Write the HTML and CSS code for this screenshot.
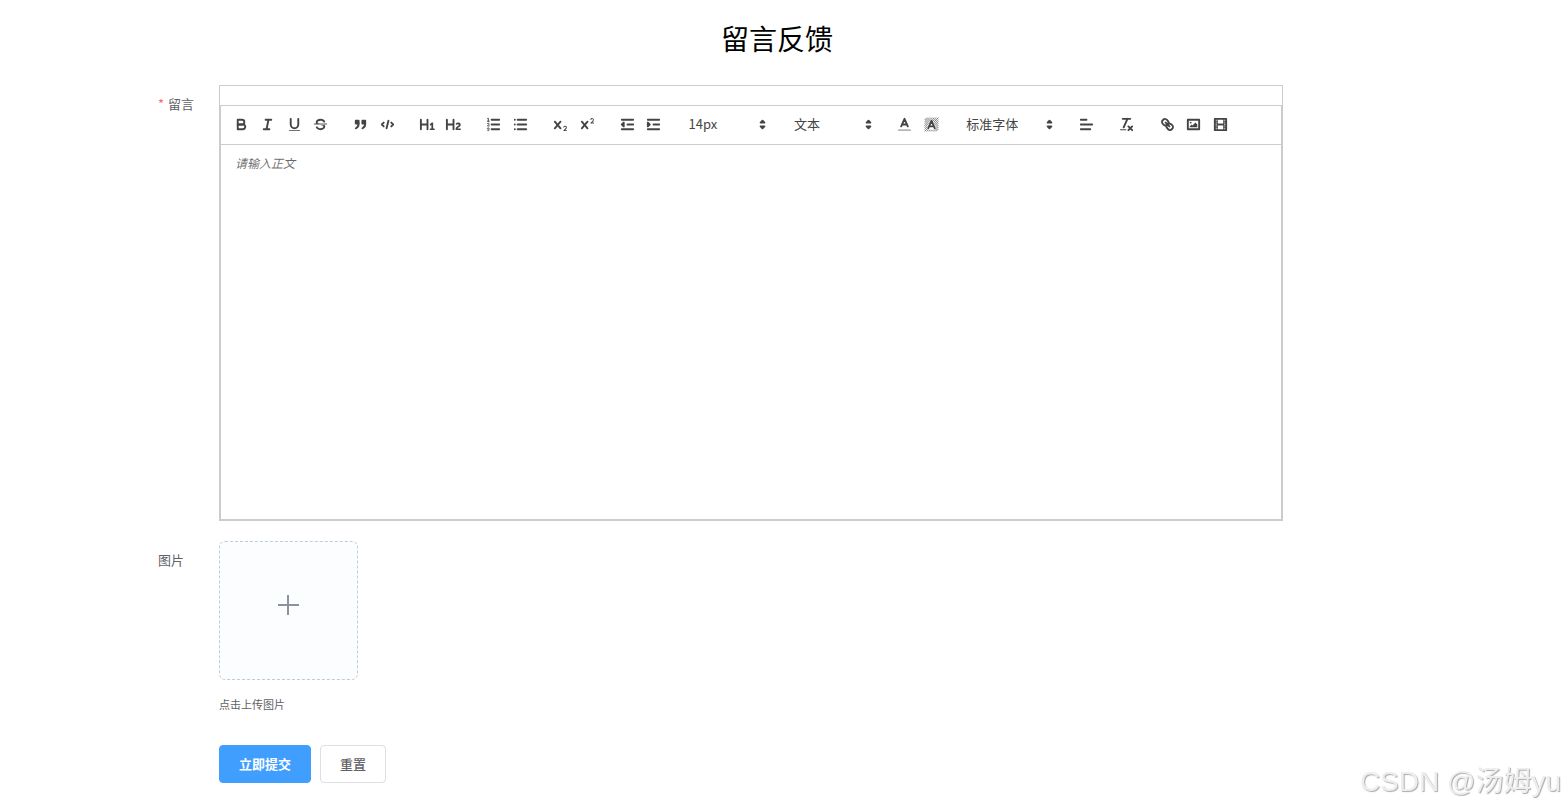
FILE: index.html
```html
<!DOCTYPE html>
<html lang="zh-CN">
<head>
<meta charset="utf-8">
<title>留言反馈</title>
<link rel="stylesheet" href="styles.css">
</head>
<body>
<main class="page">
  <h1 class="title">留言反馈</h1>
  <form class="form">
    <div class="row">
      <label class="label" for="message"><span class="required">*</span>留言</label>
      <div class="field editor">
        <div class="toolbar">
          <div class="tools">
            <div class="group four">
              <button type="button" class="tool" aria-label="加粗"><svg viewBox="0 0 18 18"><path d="M5,4H9.5A2.5,2.5,0,0,1,12,6.5v0A2.5,2.5,0,0,1,9.5,9H5V4Z"/><path d="M5,9h5.5A2.5,2.5,0,0,1,13,11.5v0A2.5,2.5,0,0,1,10.5,14H5V9Z"/></svg></button>
              <button type="button" class="tool" aria-label="斜体"><svg viewBox="0 0 18 18"><path d="M7 4H13M5 14H11M8 14L10 4"/></svg></button>
              <button type="button" class="tool" aria-label="下划线"><svg viewBox="0 0 18 18"><path d="M5,3V9a4.012,4.012,0,0,0,4,4H9a4.012,4.012,0,0,0,4-4V3"/><rect class="fill" height="1" rx="0.5" ry="0.5" width="12" x="3" y="15"/></svg></button>
              <button type="button" class="tool" aria-label="删除线"><svg viewBox="0 0 18 18"><path class="thin" d="M15.5 8.5H2.5"/><path class="fill" d="M9.007,8C6.542,7.791,6,7.519,6,6.5,6,5.792,7.283,5,9,5c1.571,0,2.765.679,2.969,1.309a1,1,0,0,0,1.9-.617C13.356,4.106,11.354,3,9,3,6.2,3,4,4.538,4,6.5a3.2,3.2,0,0,0,.5,1.843Z"/><path class="fill" d="M8.984,10C11.457,10.208,12,10.479,12,11.5c0,0.708-1.283,1.5-3,1.5-1.571,0-2.765-.679-2.969-1.309a1,1,0,1,0-1.9.617C4.644,13.894,6.646,15,9,15c2.8,0,5-1.538,5-3.5a3.2,3.2,0,0,0-.5-1.843Z"/></svg></button>
            </div>
            <div class="group two">
              <button type="button" class="tool" aria-label="引用"><svg viewBox="0 0 18 18"><rect class="both" height="3" width="3" x="4" y="5"/><rect class="both" height="3" width="3" x="11" y="5"/><path class="both" d="M7,8c0,4.031-3,5-3,5"/><path class="both" d="M14,8c0,4.031-3,5-3,5"/></svg></button>
              <button type="button" class="tool" aria-label="代码"><svg viewBox="0 0 18 18"><path d="M5 7L3 9L5 11M13 7L15 9L13 11M10 5L8 13"/></svg></button>
            </div>
            <div class="group two">
              <button type="button" class="tool" aria-label="一级标题"><svg viewBox="0 0 18 18"><path class="fill" d="M10,4V14a1,1,0,0,1-2,0V10H3v4a1,1,0,0,1-2,0V4A1,1,0,0,1,3,4V8H8V4a1,1,0,0,1,2,0Zm6.06787,9.209H14.98975V7.59863a.54085.54085,0,0,0-.605-.60547h-.62744a1.01119,1.01119,0,0,0-.748.29688L11.645,8.56641a.5435.5435,0,0,0-.022.8584l.28613.30762a.53861.53861,0,0,0,.84717.0332l.09912-.08789a1.2137,1.2137,0,0,0,.2417-.35254h.02246s-.01123.30859-.01123.60547V13.209H12.041a.54085.54085,0,0,0-.605.60547v.43945a.54085.54085,0,0,0,.605.60547h4.02686a.54085.54085,0,0,0,.605-.60547v-.43945A.54085.54085,0,0,0,16.06787,13.209Z"/></svg></button>
              <button type="button" class="tool" aria-label="二级标题"><svg viewBox="0 0 18 18"><path class="fill" d="M16.73975,13.81445v.43945a.54085.54085,0,0,1-.605.60547H11.855a.58392.58392,0,0,1-.64893-.60547V14.0127c0-2.90527,3.39941-3.42187,3.39941-4.55469a.77675.77675,0,0,0-.84717-.78125,1.17684,1.17684,0,0,0-.83594.38477c-.2749.26367-.561.374-.85791.13184l-.4292-.34082c-.30811-.24219-.38525-.51758-.1543-.81445a2.97155,2.97155,0,0,1,2.45361-1.17676,2.45393,2.45393,0,0,1,2.68408,2.40918c0,2.45312-3.1792,2.92676-3.27832,3.93848h2.79443A.54085.54085,0,0,1,16.73975,13.81445ZM9,3A.99974.99974,0,0,0,8,4V8H3V4A1,1,0,0,0,1,4V14a1,1,0,0,0,2,0V10H8v4a1,1,0,0,0,2,0V4A.99974.99974,0,0,0,9,3Z"/></svg></button>
            </div>
            <div class="group two">
              <button type="button" class="tool" aria-label="有序列表"><svg viewBox="0 0 18 18"><path d="M7 4H15M7 9H15M7 14H15"/><path class="thin" d="M2.5 5.5H4.5"/><path class="fill" d="M3.5,6A0.5,0.5,0,0,1,3,5.5V3.085l-0.276.138A0.5,0.5,0,0,1,2.053,3c-0.124-.247-0.023-0.324.224-0.447l1-.5A0.5,0.5,0,0,1,4,2.5v3A0.5,0.5,0,0,1,3.5,6Z"/><path class="thin" d="M4.5,10.5h-2c0-.234,1.85-1.076,1.85-2.234A0.959,0.959,0,0,0,2.5,8.156"/><path class="thin" d="M2.5,14.846a0.959,0.959,0,0,0,1.85-.109A0.7,0.7,0,0,0,3.75,14a0.688,0.688,0,0,0,.6-0.736,0.959,0.959,0,0,0-1.85-.109"/></svg></button>
              <button type="button" class="tool" aria-label="无序列表"><svg viewBox="0 0 18 18"><path d="M6 4H15M6 9H15M6 14H15M3 4V4M3 9V9M3 14V14"/></svg></button>
            </div>
            <div class="group two">
              <button type="button" class="tool" aria-label="下标"><svg viewBox="0 0 18 18"><path class="fill" d="M15.5,15H13.861a3.858,3.858,0,0,0,1.914-2.975,1.8,1.8,0,0,0-1.6-1.751A1.921,1.921,0,0,0,12.021,11.7a0.50013,0.50013,0,1,0,.957.291h0a0.914,0.914,0,0,1,1.053-.725,0.81,0.81,0,0,1,.744.762c0,1.076-1.16971,1.86982-1.93971,2.43082A1.45639,1.45639,0,0,0,12,15.5a0.5,0.5,0,0,0,.5.5h3A0.5,0.5,0,0,0,15.5,15Z"/><path class="fill" d="M9.65,5.241a1,1,0,0,0-1.409.108L6,7.964,3.759,5.349A1,1,0,0,0,2.192,6.59178Q2.21541,6.6213,2.241,6.649L4.684,9.5,2.241,12.35A1,1,0,0,0,3.71,13.70722q0.02557-.02768.049-0.05722L6,11.036,8.241,13.65a1,1,0,1,0,1.567-1.24277Q9.78459,12.3777,9.759,12.35L7.316,9.5,9.759,6.651A1,1,0,0,0,9.65,5.241Z"/></svg></button>
              <button type="button" class="tool" aria-label="上标"><svg viewBox="0 0 18 18"><path class="fill" d="M15.5,7H13.861a4.015,4.015,0,0,0,1.914-2.975,1.8,1.8,0,0,0-1.6-1.751A1.922,1.922,0,0,0,12.021,3.7a0.5,0.5,0,1,0,.957.291,0.917,0.917,0,0,1,1.053-.725,0.81,0.81,0,0,1,.744.762c0,1.077-1.164,1.925-1.934,2.486A1.423,1.423,0,0,0,12,7.5a0.5,0.5,0,0,0,.5.5h3A0.5,0.5,0,0,0,15.5,7Z"/><path class="fill" d="M9.651,5.241a1,1,0,0,0-1.41.108L6,7.964,3.759,5.349a1,1,0,1,0-1.519,1.3L4.683,9.5,2.241,12.35a1,1,0,1,0,1.519,1.3L6,11.036,8.241,13.65a1,1,0,0,0,1.519-1.3L7.317,9.5,9.759,6.651A1,1,0,0,0,9.651,5.241Z"/></svg></button>
            </div>
            <div class="group two">
              <button type="button" class="tool" aria-label="减少缩进"><svg viewBox="0 0 18 18"><path d="M3 14H15M3 4H15M9 9H15"/><path class="both" d="M5 7V11L3 9Z"/></svg></button>
              <button type="button" class="tool" aria-label="增加缩进"><svg viewBox="0 0 18 18"><path d="M3 14H15M3 4H15M9 9H15"/><path class="both" d="M3 7V11L5 9Z"/></svg></button>
            </div>
            <div class="picker">
              <select aria-label="字号"><option>14px</option></select>
              <svg class="caret" viewBox="0 0 18 18"><path class="both" d="M7 11L9 13L11 11ZM7 7L9 5L11 7Z"/></svg>
            </div>
            <div class="picker">
              <select aria-label="段落格式"><option>文本</option></select>
              <svg class="caret" viewBox="0 0 18 18"><path class="both" d="M7 11L9 13L11 11ZM7 7L9 5L11 7Z"/></svg>
            </div>
            <div class="group two">
              <button type="button" class="tool" aria-label="文字颜色"><svg viewBox="0 0 18 18"><path class="faint" d="M3 15H15"/><path d="M5.5 11L9 3L12.5 11M11.63 9H6.38"/></svg></button>
              <button type="button" class="tool" aria-label="背景颜色"><svg viewBox="0 0 18 18"><path class="hatch" d="M2 4L4 2M2 6L6 2M2 8L8 2M2 10L10 2M2 12L12 2M2 14L14 2M2 16L16 2M4 16L16 4M6 16L16 6M8 16L16 8M10 16L16 10M12 16L16 12M14 16L16 14"/><path class="halo" d="M5.5 13L9 5L12.5 13Z"/><path d="M5.5 13L9 5L12.5 13M11.63 11H6.38"/></svg></button>
            </div>
            <div class="picker wide">
              <select aria-label="字体"><option>标准字体</option></select>
              <svg class="caret" viewBox="0 0 18 18"><path class="both" d="M7 11L9 13L11 11ZM7 7L9 5L11 7Z"/></svg>
            </div>
            <div class="group one">
              <button type="button" class="tool" aria-label="对齐"><svg viewBox="0 0 18 18"><path d="M3 9H15M3 14H13M3 4H9"/></svg></button>
            </div>
            <div class="group one">
              <button type="button" class="tool" aria-label="清除格式"><svg viewBox="0 0 18 18"><path d="M5 3H13M6 12L10 3M11 11L15 15M15 11L11 15"/><rect class="fill" height="1" rx="0.5" ry="0.5" width="7" x="2" y="14"/></svg></button>
            </div>
            <div class="group three">
              <button type="button" class="tool" aria-label="链接"><svg viewBox="0 0 18 18"><path d="M7 7L11 11"/><path d="M8.9,4.577a3.476,3.476,0,0,1,.36,4.679A3.476,3.476,0,0,1,4.577,8.9C3.185,7.5,2.035,6.4,4.217,4.217S7.5,3.185,8.9,4.577Z"/><path d="M13.423,9.1a3.476,3.476,0,0,0-4.679-.36,3.476,3.476,0,0,0,.36,4.679c1.392,1.392,2.5,2.542,4.679.36S14.815,10.5,13.423,9.1Z"/></svg></button>
              <button type="button" class="tool" aria-label="图片"><svg viewBox="0 0 18 18"><rect height="10" width="12" x="3" y="4"/><circle class="fill" cx="6" cy="7" r="1"/><path class="fill" d="M5 12V11L7 9L8 10L11 7L13 9V12Z"/></svg></button>
              <button type="button" class="tool" aria-label="视频"><svg viewBox="0 0 18 18"><rect height="12" width="12" x="3" y="3"/><rect class="fill" height="12" width="1" x="5" y="3"/><rect class="fill" height="12" width="1" x="12" y="3"/><rect class="fill" height="2" width="8" x="5" y="8"/><path class="fill" d="M3 5H6V6H3ZM3 7H6V8H3ZM3 10H6V11H3ZM3 12H6V13H3ZM12 5H15V6H12ZM12 7H15V8H12ZM12 10H15V11H12ZM12 12H15V13H12Z"/></svg></button>
            </div>
          </div>
        </div>
        <textarea class="text" id="message" placeholder="请输入正文"></textarea>
      </div>
    </div>
    <div class="row">
      <label class="label" for="picture">图片</label>
      <div class="field">
        <button type="button" class="upload" id="picture" aria-label="上传图片"><svg viewBox="0 0 23 22"><path d="M1 11H22M11 1V21"/></svg></button>
        <p class="tip">点击上传图片</p>
        <div class="actions">
          <button type="submit" class="btn primary">立即提交</button>
          <button type="reset" class="btn">重置</button>
        </div>
      </div>
    </div>
  </form>
</main>
<div class="watermark">CSDN @汤姆yu</div>
</body>
</html>
```
FILE: styles.css
```css
* {
  box-sizing: border-box;
}

body {
  margin: 0;
  background: #fff;
  color: #606266;
  font: 13px/20px "Noto Sans CJK SC", sans-serif;
}

button,
select,
textarea {
  font: inherit;
}

.page {
  margin: 0 169px 0 158px;
  padding-top: 18px;
}

.title {
  margin: 0 0 27px;
  color: #000;
  font-size: 28px;
  font-weight: 400;
  line-height: 40px;
  text-align: center;
}

.form {
  margin-right: 113px;
}

.row {
  display: flex;
  margin-bottom: 20px;
}

.label {
  flex: none;
  width: 61px;
  line-height: 37px;
}

.required {
  margin-right: 4px;
  color: #f56c6c;
}

.field {
  flex: 1;
  min-width: 0;
}

.editor {
  display: flex;
  flex-direction: column;
  padding-top: 19px;
  border: 1px solid #ccc;
}

.toolbar {
  padding: 7px 7px 9px;
  border: 1px solid #ccc;
}

.tools {
  display: flex;
  justify-content: space-between;
  max-width: 1006px;
  height: 22px;
}

.group {
  display: flex;
}

.one {
  width: 27px;
}

.two {
  width: 53px;
}

.three {
  width: 80px;
}

.four {
  width: 106px;
}

.tool {
  display: flex;
  flex: 1;
  align-items: center;
  justify-content: center;
  padding: 0;
  border: 0;
  background: none;
  cursor: pointer;
}

.tools svg {
  width: 17px;
  height: 17px;
  fill: none;
  stroke: #444;
  stroke-width: 2;
  stroke-linecap: round;
  stroke-linejoin: round;
}

.tools .fill {
  fill: #444;
  stroke: none;
}

.tools .both {
  fill: #444;
}

.tools .thin {
  stroke-width: 1;
}

.tools .hatch {
  stroke-width: 0.7;
}

.tools .halo {
  fill: #fff;
  stroke: #fff;
  stroke-width: 3;
}

.tools .faint {
  opacity: 0.4;
}

.picker {
  position: relative;
  width: 92px;
}

.wide {
  width: 101px;
}

.picker select {
  width: 100%;
  height: 22px;
  padding: 0 8px;
  border: 0;
  appearance: none;
  background: none;
  color: #444;
}

.picker .caret {
  position: absolute;
  top: 3px;
  right: 1px;
  pointer-events: none;
}

.text {
  display: block;
  height: 375px;
  padding: 8px 14px;
  border: 1px solid #ccc;
  border-top: 0;
  outline: 0;
  resize: none;
  font-size: 12px;
}

.text::placeholder {
  color: rgba(0, 0, 0, 0.6);
  font-style: italic;
}

.upload {
  display: flex;
  align-items: center;
  justify-content: center;
  width: 139px;
  height: 139px;
  padding: 0 0 12px;
  border: 1px dashed #c0ccda;
  border-radius: 6px;
  background: #fbfdff;
  cursor: pointer;
}

.upload svg {
  width: 23px;
  height: 22px;
  fill: none;
  stroke: #8c939d;
  stroke-width: 2;
}

.tip {
  margin: 14px 0 31px;
  font-size: 11px;
}

.actions {
  display: flex;
  gap: 9px;
}

.btn {
  height: 38px;
  padding: 0 19px;
  border: 1px solid #dcdfe6;
  border-radius: 4px;
  background: #fff;
  color: #606266;
  font-weight: 500;
  cursor: pointer;
}

.primary {
  border-color: #409eff;
  background: #409eff;
  color: #fff;
  font-weight: 700;
}

.watermark {
  position: fixed;
  right: 4px;
  bottom: 8px;
  color: #eee;
  font: 28px/40px "Liberation Sans", "Noto Sans CJK SC", sans-serif;
  text-shadow: 1px 1px 1px #aaa;
}
```
